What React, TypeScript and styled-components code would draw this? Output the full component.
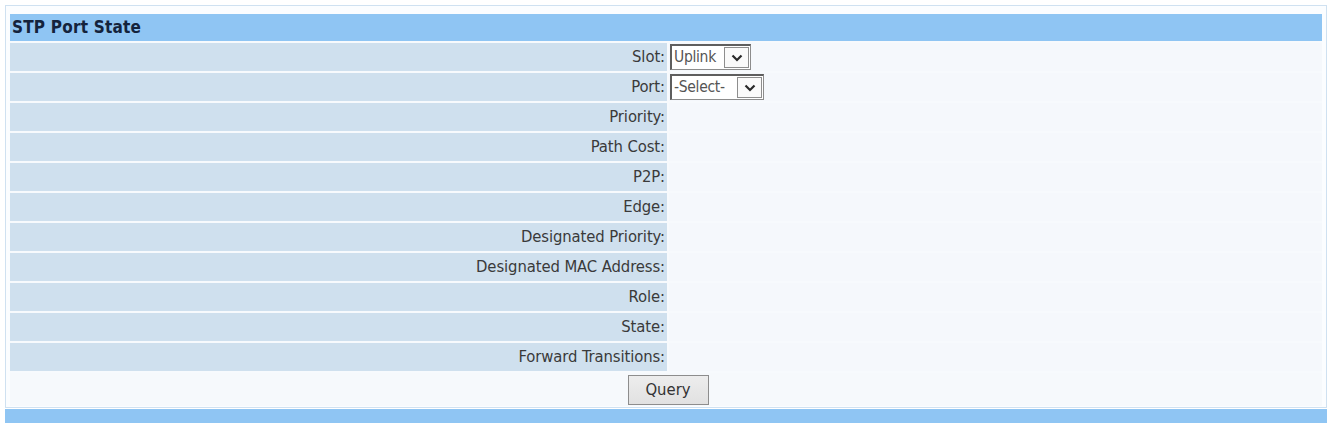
import { FC, Fragment } from 'react';
import styled, { createGlobalStyle } from 'styled-components';

const GlobalStyle = createGlobalStyle`
  html, body {
    margin: 0;
    padding: 0;
    background: #ffffff;
  }
  body {
    font-family: Tahoma, "DejaVu Sans Condensed", "DejaVu Sans", sans-serif;
    font-size: 16.5px;
    color: #222;
  }
`;

const Page = styled.div`
  width: 1331px;
  height: 423px;
  overflow: hidden;
  padding: 5px 4px 0 5px;
  box-sizing: border-box;
`;

const Panel = styled.div`
  border: 1px solid #cfe1f1;
  padding: 8px 4px 1px 4px;
  background: #fbfdff;
`;

const Table = styled.div`
  display: grid;
  grid-template-columns: 657px 1fr;
  row-gap: 2px;
  column-gap: 2px;
  background: #f7fafd;
`;

const Title = styled.div`
  grid-column: 1 / -1;
  height: 27px;
  line-height: 27px;
  padding-left: 2px;
  background: #8fc5f3;
  font-weight: bold;
  font-size: 17px;
  letter-spacing: 0.2px;
  color: #14233c;
`;

const Label = styled.div`
  height: 28px;
  line-height: 28px;
  text-align: right;
  padding-right: 2px;
  background: #cfe0ee;
  color: #3a3a3a;
  letter-spacing: -0.1px;
`;

const Value = styled.div`
  height: 28px;
  display: flex;
  align-items: center;
  background: #f5f8fc;
`;

const SelectBox = styled.div<{ width: number }>`
  display: flex;
  align-items: stretch;
  width: ${({ width }) => width}px;
  height: 26px;
  border: 1px solid #8c8c8c;
  border-top: 2px solid #5e5e5e;
  border-left: 2px solid #5e5e5e;
  background: #fff;
  box-sizing: border-box;
  font-size: 15.5px;
  margin-left: 1px;
`;

const SelectText = styled.span`
  flex: 1;
  padding-left: 2px;
  line-height: 22px;
  color: #555;
  letter-spacing: -0.3px;
  white-space: nowrap;
`;

const SelectArrow = styled.span`
  width: 25px;
  margin: 1px;
  border: 1px solid #8e8e8e;
  display: flex;
  align-items: center;
  justify-content: center;
  background: #fafafa;
  box-sizing: border-box;
`;

const ButtonRow = styled.div`
  grid-column: 1 / -1;
  height: 33px;
  display: flex;
  justify-content: center;
  align-items: center;
  background: #f6f9fc;
`;

const Button = styled.button`
  width: 81px;
  height: 30px;
  margin-left: 4px;
  border: 1px solid #8d8d8d;
  background: linear-gradient(#ededed, #e1e1e1);
  font-family: Tahoma, "DejaVu Sans Condensed", "DejaVu Sans", sans-serif;
  font-size: 16.5px;
  color: #333;
  padding: 0;
`;

const BottomBar = styled.div`
  height: 15px;
  margin-top: 1px;
  background: #8fc5f3;
`;

const Arrow: FC = () => (
  <svg width="12" height="8" viewBox="0 0 12 8">
    <path d="M1.5 1.5 L6 6 L10.5 1.5" fill="none" stroke="#2a2a2a" strokeWidth="2.2" />
  </svg>
);

const Select: FC<{ text: string; width: number }> = ({ text, width }) => (
  <SelectBox width={width}>
    <SelectText>{text}</SelectText>
    <SelectArrow>
      <Arrow />
    </SelectArrow>
  </SelectBox>
);

const fields = [
  'Priority',
  'Path Cost',
  'P2P',
  'Edge',
  'Designated Priority',
  'Designated MAC Address',
  'Role',
  'State',
  'Forward Transitions',
];

const App: FC = () => (
  <>
    <GlobalStyle />
    <Page>
      <Panel>
        <Table>
          <Title>STP Port State</Title>
          <Label>Slot:</Label>
          <Value>
            <Select text="Uplink" width={81} />
          </Value>
          <Label>Port:</Label>
          <Value>
            <Select text="-Select-" width={94} />
          </Value>
          {fields.map((f) => (
            <Fragment key={f}>
              <Label>{f}:</Label>
              <Value />
            </Fragment>
          ))}
          <ButtonRow>
            <Button>Query</Button>
          </ButtonRow>
        </Table>
      </Panel>
      <BottomBar />
    </Page>
  </>
);

export default App;
